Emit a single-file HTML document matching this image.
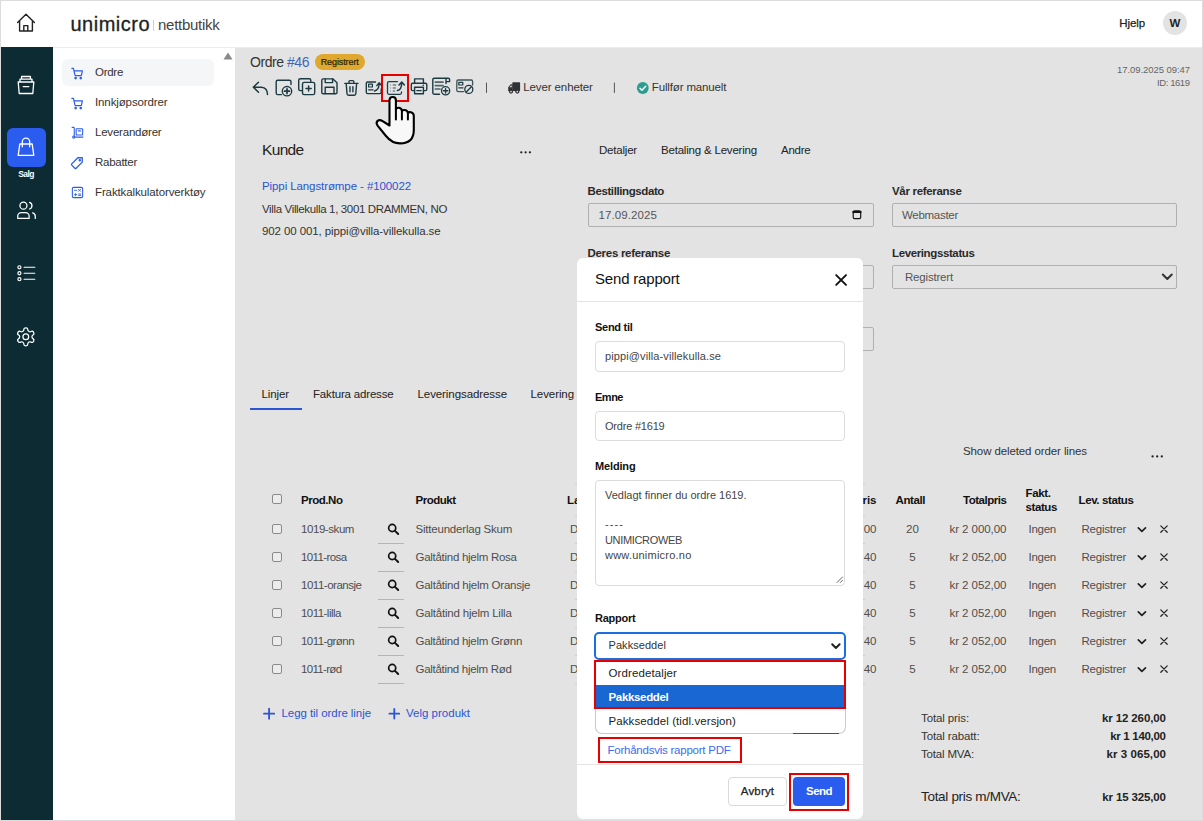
<!DOCTYPE html>
<html lang="no"><head><meta charset="utf-8"><title>Ordre #46 - Send rapport</title>
<style>
html,body{margin:0;padding:0;}
body{width:1203px;height:821px;overflow:hidden;position:relative;background:#e3e3e3;font-family:"Liberation Sans", sans-serif;}
.a{position:absolute;box-sizing:border-box;}
.t{position:absolute;white-space:nowrap;font-family:"Liberation Sans", sans-serif;}
svg{position:absolute;overflow:visible;}


</style></head><body>
<div class="a " style="left:0px;top:0px;width:1203px;height:47px;background:#fff;"></div><div class="a " style="left:0px;top:47px;width:1203px;height:1px;background:#ececec;"></div><div class="a " style="left:1px;top:47px;width:52px;height:774px;background:#0c2b33;"></div><div class="a " style="left:53px;top:48px;width:182px;height:773px;background:#fff;"></div><div class="a " style="left:62px;top:59px;width:152px;height:27px;background:#f5f6f8;border-radius:6px;"></div><div class="a " style="left:7px;top:128px;width:39px;height:39px;background:#2b5cf0;border-radius:6px;"></div><svg style="left:0;top:0" width="60" height="47" viewBox="0 0 60 47" fill="none" stroke="#222" stroke-width="1.4" stroke-linecap="round" stroke-linejoin="round"><path d="M17.6 22.6 L26 14.2 L34.4 22.6 M19.6 21 V31 H32.4 V21 M23.8 31 V25.6 H27.8 V31"/></svg><span class="t" style="left:70.50px;top:11.00px;font-size:20px;font-weight:400;color:#222;line-height:26px;letter-spacing:0.49px;-webkit-text-stroke:0.3px #222;">unimicro</span><div class="a " style="left:153px;top:20px;width:1px;height:11px;background:#cfcfcf;"></div><span class="t" style="left:158.00px;top:14.50px;font-size:15px;font-weight:400;color:#444;line-height:20px;letter-spacing:-0.272px;">nettbutikk</span><span class="t" style="left:1119.30px;top:15.50px;font-size:11.5px;font-weight:400;color:#222;line-height:15px;letter-spacing:-0.084px;-webkit-text-stroke:0.25px #222;">Hjelp</span><div class="a " style="left:1163px;top:11px;width:24px;height:24px;background:#e3e3e3;border-radius:50%;"></div><span class="t" style="left:1169.57px;top:15.50px;font-size:11.5px;font-weight:700;color:#222;line-height:15px;">W</span><svg style="left:0;top:47px" width="53" height="400" viewBox="0 47 53 400" fill="none" stroke="#fff" stroke-width="1.3" stroke-linecap="round" stroke-linejoin="round"><path d="M18.2 82 H33.8 L32.8 93.5 H19.2 Z M20 82 V79.2 H32 V82 M21.6 79.2 V76.5 H30.4 V79.2 M23.2 86.6 H28.8"/><path d="M19.8 144 H32.2 L33.8 155.4 H18.2 Z M22.3 146.8 V141.8 a3.7 3.7 0 0 1 7.4 0 V146.8"/></svg><span class="t" style="left:18.25px;top:169.00px;font-size:8.5px;font-weight:700;color:#ffffff;line-height:11px;letter-spacing:-0.613px;">Salg</span><svg style="left:15.6px;top:200.3px" width="21" height="21" viewBox="0 0 24 24" fill="none" stroke="#ffffff" stroke-width="1.45" stroke-linecap="round" stroke-linejoin="round" ><path d="M15 21v-2.5a4 4 0 0 0-4-4H6a4 4 0 0 0-4 4V21Z"/><circle cx="8.5" cy="6.5" r="4"/><path d="M22 21v-2.5a4 4 0 0 0-3-3.87"/><path d="M15.5 2.7a4 4 0 0 1 0 7.6"/></svg><svg style="left:15.6px;top:262.8px" width="20.5" height="20.5" viewBox="0 0 24 24" fill="none" stroke="#ffffff" stroke-width="1.4" stroke-linecap="round" stroke-linejoin="round" ><circle cx="4" cy="5" r="1.8"/><circle cx="4" cy="12" r="1.8"/><circle cx="4" cy="19" r="1.8"/><path d="M9.5 5 H22 M9.5 12 H22 M9.5 19 H22"/></svg><svg style="left:15.2px;top:326.3px" width="21.6" height="21.6" viewBox="0 0 24 24" fill="none" stroke="#ffffff" stroke-width="1.4" stroke-linecap="round" stroke-linejoin="round" ><path d="M12.22 2h-.44a2 2 0 0 0-2 2v.18a2 2 0 0 1-1 1.73l-.43.25a2 2 0 0 1-2 0l-.15-.08a2 2 0 0 0-2.73.73l-.22.38a2 2 0 0 0 .73 2.73l.15.1a2 2 0 0 1 1 1.72v.51a2 2 0 0 1-1 1.74l-.15.09a2 2 0 0 0-.73 2.73l.22.38a2 2 0 0 0 2.73.73l.15-.08a2 2 0 0 1 2 0l.43.25a2 2 0 0 1 1 1.73V20a2 2 0 0 0 2 2h.44a2 2 0 0 0 2-2v-.18a2 2 0 0 1 1-1.73l.43-.25a2 2 0 0 1 2 0l.15.08a2 2 0 0 0 2.73-.73l.22-.39a2 2 0 0 0-.73-2.73l-.15-.08a2 2 0 0 1-1-1.74v-.5a2 2 0 0 1 1-1.74l.15-.09a2 2 0 0 0 .73-2.73l-.22-.38a2 2 0 0 0-2.73-.73l-.15.08a2 2 0 0 1-2 0l-.43-.25a2 2 0 0 1-1-1.73V4a2 2 0 0 0-2-2z"/><circle cx="12" cy="12" r="3.2"/></svg><svg style="left:70.5px;top:66.5px" width="13" height="13" viewBox="0 0 24 24" fill="none" stroke="#2b5cf0" stroke-width="2.2" stroke-linecap="round" stroke-linejoin="round" ><circle cx="8.5" cy="20.5" r="1.3" fill="#2b5cf0"/><circle cx="18" cy="20.5" r="1.3" fill="#2b5cf0"/><path d="M1.5 2.5 h3 l2.7 12.2 a1.6 1.6 0 0 0 1.6 1.3 h9 a1.6 1.6 0 0 0 1.6 -1.3 l1.6 -7.7 H5.6"/></svg><svg style="left:70.5px;top:96.5px" width="13" height="13" viewBox="0 0 24 24" fill="none" stroke="#2b5cf0" stroke-width="2.2" stroke-linecap="round" stroke-linejoin="round" ><circle cx="8.5" cy="20.5" r="1.3" fill="#2b5cf0"/><circle cx="18" cy="20.5" r="1.3" fill="#2b5cf0"/><path d="M1.5 2.5 h3 l2.7 12.2 a1.6 1.6 0 0 0 1.6 1.3 h9 a1.6 1.6 0 0 0 1.6 -1.3 l1.6 -7.7 H5.6"/></svg><svg style="left:70.5px;top:126px" width="13" height="13" viewBox="0 0 24 24" fill="none" stroke="#2b5cf0" stroke-width="2" stroke-linecap="round" stroke-linejoin="round" ><path d="M2 2.5 h2.5 a1.5 1.5 0 0 1 1.5 1.5 V18.5"/><circle cx="5" cy="20.5" r="1.9"/><path d="M7 20.5 H22"/><rect x="9.5" y="5" width="12" height="11.5" rx="1"/><path d="M13.5 9 h4"/></svg><svg style="left:70px;top:155.5px" width="14" height="14" viewBox="0 0 24 24" fill="none" stroke="#2b5cf0" stroke-width="2.2" stroke-linecap="round" stroke-linejoin="round" ><path d="M13.5 3 H21 V10.5 L10.5 21 a1.5 1.5 0 0 1 -2.1 0 L3 15.6 a1.5 1.5 0 0 1 0 -2.1 Z"/><circle cx="16.8" cy="7.2" r="1" fill="#2b5cf0"/></svg><svg style="left:70.5px;top:186px" width="13" height="13" viewBox="0 0 24 24" fill="none" stroke="#2b5cf0" stroke-width="2" stroke-linecap="round" stroke-linejoin="round" ><rect x="2.5" y="2.5" width="19" height="19" rx="2.5"/><path d="M6.5 8 h4 M14 6.2 l3.6 3.6 M17.6 6.2 l-3.6 3.6 M6.5 16 h4 M8.5 14 v4 M14 14.8 h4 M14 17.4 h4" stroke-width="1.7"/></svg><span class="t" style="left:95.00px;top:65.00px;font-size:11.5px;font-weight:400;color:#333;line-height:15px;letter-spacing:-0.281px;">Ordre</span><span class="t" style="left:95.00px;top:95.00px;font-size:11.5px;font-weight:400;color:#333;line-height:15px;letter-spacing:-0.117px;">Innkjøpsordrer</span><span class="t" style="left:95.00px;top:125.00px;font-size:11.5px;font-weight:400;color:#333;line-height:15px;letter-spacing:-0.212px;">Leverandører</span><span class="t" style="left:95.00px;top:155.00px;font-size:11.5px;font-weight:400;color:#333;line-height:15px;letter-spacing:-0.264px;">Rabatter</span><span class="t" style="left:95.00px;top:185.00px;font-size:11.5px;font-weight:400;color:#333;line-height:15px;letter-spacing:-0.119px;">Fraktkalkulatorverktøy</span><svg style="left:222.5px;top:51.5px" width="10" height="8" viewBox="0 0 10 8"><path d="M5 0.5 L9.5 7.5 H0.5 Z" fill="#8a8a8a"/></svg><span class="t" style="left:250.00px;top:52.50px;font-size:14px;font-weight:400;color:#333;line-height:18px;letter-spacing:-0.45px;">Ordre <span style="color:#3d68b8">#46</span></span><div class="a " style="left:315px;top:54px;width:49.5px;height:16px;background:#e0a82e;border-radius:8px;"></div><span class="t" style="left:320.70px;top:56.00px;font-size:9px;font-weight:400;color:#2a2200;line-height:12px;letter-spacing:-0.102px;-webkit-text-stroke:0.2px #2a2200;">Registrert</span><span class="t" style="left:1116.95px;top:64.00px;font-size:9.5px;font-weight:400;color:#666;line-height:12px;letter-spacing:-0.061px;">17.09.2025 09:47</span><span class="t" style="left:1157.07px;top:77.00px;font-size:9.5px;font-weight:400;color:#666;line-height:12px;letter-spacing:-0.428px;">ID: 1619</span><div class="a " style="left:381px;top:74px;width:28px;height:28px;border:2px solid #e60000;"></div><span class="t" style="left:523.30px;top:80.00px;font-size:11.5px;font-weight:400;color:#333;line-height:15px;letter-spacing:-0.113px;">Lever enheter</span><span class="t" style="left:651.80px;top:80.00px;font-size:11.5px;font-weight:400;color:#333;line-height:15px;letter-spacing:-0.146px;">Fullfør manuelt</span><span class="t" style="left:262.00px;top:140.00px;font-size:15.5px;font-weight:400;color:#222;line-height:20px;letter-spacing:-0.666px;">Kunde</span><span class="t" style="left:262.00px;top:178.50px;font-size:11.5px;font-weight:400;color:#2a54d2;line-height:15px;letter-spacing:-0.093px;">Pippi Langstrømpe - #100022</span><span class="t" style="left:262.00px;top:201.50px;font-size:11.5px;font-weight:400;color:#333;line-height:15px;letter-spacing:-0.353px;">Villa Villekulla 1, 3001 DRAMMEN, NO</span><span class="t" style="left:262.00px;top:223.50px;font-size:11.5px;font-weight:400;color:#333;line-height:15px;letter-spacing:-0.105px;">902 00 001, pippi@villa-villekulla.se</span><span class="t" style="left:599.00px;top:142.50px;font-size:11.5px;font-weight:400;color:#222;line-height:15px;letter-spacing:-0.205px;">Detaljer</span><span class="t" style="left:661.00px;top:142.50px;font-size:11.5px;font-weight:400;color:#222;line-height:15px;letter-spacing:-0.197px;">Betaling &amp; Levering</span><span class="t" style="left:781.00px;top:142.50px;font-size:11.5px;font-weight:400;color:#222;line-height:15px;letter-spacing:-0.237px;">Andre</span><span class="t" style="left:587.50px;top:183.50px;font-size:11.5px;font-weight:700;color:#2a2a2a;line-height:15px;letter-spacing:-0.396px;">Bestillingsdato</span><span class="t" style="left:892.00px;top:183.50px;font-size:11.5px;font-weight:700;color:#2a2a2a;line-height:15px;letter-spacing:-0.31px;">Vår referanse</span><span class="t" style="left:587.50px;top:245.50px;font-size:11.5px;font-weight:700;color:#2a2a2a;line-height:15px;letter-spacing:-0.297px;">Deres referanse</span><span class="t" style="left:892.00px;top:245.50px;font-size:11.5px;font-weight:700;color:#2a2a2a;line-height:15px;letter-spacing:-0.38px;">Leveringsstatus</span><div class="a " style="left:588px;top:203px;width:286px;height:24px;border:1px solid #b0b0b0;border-radius:2px;"></div><div class="a " style="left:892px;top:203px;width:285px;height:24px;border:1px solid #b0b0b0;border-radius:2px;"></div><div class="a " style="left:588px;top:265px;width:286px;height:24px;border:1px solid #b0b0b0;border-radius:2px;"></div><div class="a " style="left:892px;top:265px;width:285px;height:24px;border:1px solid #b0b0b0;border-radius:2px;"></div><div class="a " style="left:588px;top:327px;width:286px;height:24px;border:1px solid #b0b0b0;border-radius:2px;"></div><span class="t" style="left:598.50px;top:208.00px;font-size:11.5px;font-weight:400;color:#555;line-height:15px;letter-spacing:0.094px;">17.09.2025</span><span class="t" style="left:902.00px;top:208.00px;font-size:11.5px;font-weight:400;color:#555;line-height:15px;letter-spacing:-0.288px;">Webmaster</span><span class="t" style="left:905.00px;top:270.00px;font-size:11.5px;font-weight:400;color:#555;line-height:15px;letter-spacing:-0.186px;">Registrert</span><span class="t" style="left:261.50px;top:386.50px;font-size:11.5px;font-weight:400;color:#222;line-height:15px;letter-spacing:-0.107px;">Linjer</span><span class="t" style="left:313.00px;top:386.50px;font-size:11.5px;font-weight:400;color:#222;line-height:15px;letter-spacing:-0.174px;">Faktura adresse</span><span class="t" style="left:417.50px;top:386.50px;font-size:11.5px;font-weight:400;color:#222;line-height:15px;letter-spacing:-0.08px;">Leveringsadresse</span><span class="t" style="left:530.50px;top:386.50px;font-size:11.5px;font-weight:400;color:#222;line-height:15px;letter-spacing:-0.078px;">Levering</span><div class="a " style="left:250px;top:408px;width:52px;height:2px;background:#2b55d4;"></div><span class="t" style="left:963.00px;top:443.50px;font-size:11.5px;font-weight:400;color:#333;line-height:15px;letter-spacing:-0.108px;">Show deleted order lines</span><div class="a " style="left:272px;top:494px;width:10px;height:10px;border:1px solid #8a8a8a;border-radius:2px;background:#ececec;"></div><span class="t" style="left:301.00px;top:493.00px;font-size:11.5px;font-weight:700;color:#111;line-height:15px;letter-spacing:-0.462px;">Prod.No</span><span class="t" style="left:415.50px;top:493.00px;font-size:11.5px;font-weight:700;color:#111;line-height:15px;letter-spacing:-0.493px;">Produkt</span><span class="t" style="left:567.00px;top:493.00px;font-size:11.5px;font-weight:700;color:#111;line-height:15px;">La</span><span class="t" style="left:862.42px;top:493.00px;font-size:11.5px;font-weight:700;color:#111;line-height:15px;">ris</span><span class="t" style="left:895.50px;top:493.00px;font-size:11.5px;font-weight:700;color:#111;line-height:15px;letter-spacing:-0.409px;">Antall</span><span class="t" style="left:963.00px;top:493.00px;font-size:11.5px;font-weight:700;color:#111;line-height:15px;letter-spacing:-0.469px;">Totalpris</span><span class="t" style="left:1025.50px;top:485.50px;font-size:11.5px;font-weight:700;color:#111;line-height:15px;letter-spacing:-0.369px;">Fakt.</span><span class="t" style="left:1025.50px;top:500.00px;font-size:11.5px;font-weight:700;color:#111;line-height:15px;letter-spacing:-0.396px;">status</span><span class="t" style="left:1078.50px;top:493.00px;font-size:11.5px;font-weight:700;color:#111;line-height:15px;letter-spacing:-0.385px;">Lev. status</span><div class="a " style="left:272px;top:523.5px;width:10px;height:10.0px;border:1px solid #8a8a8a;border-radius:2px;background:#ececec;"></div><span class="t" style="left:301.00px;top:522.00px;font-size:11.5px;font-weight:400;color:#4e4e4e;line-height:15px;letter-spacing:-0.432px;">1019-skum</span><span class="t" style="left:415.50px;top:522.00px;font-size:11.5px;font-weight:400;color:#4e4e4e;line-height:15px;letter-spacing:-0.204px;">Sitteunderlag Skum</span><span class="t" style="left:570.00px;top:522.00px;font-size:11.5px;font-weight:400;color:#4e4e4e;line-height:15px;">D</span><span class="t" style="left:863.85px;top:522.00px;font-size:11.5px;font-weight:400;color:#4e4e4e;line-height:15px;letter-spacing:-0.148px;">00</span><span class="t" style="left:906.10px;top:522.00px;font-size:11.5px;font-weight:400;color:#4e4e4e;line-height:15px;">20</span><span class="t" style="left:949.45px;top:522.00px;font-size:11.5px;font-weight:400;color:#4e4e4e;line-height:15px;letter-spacing:-0.05px;">kr 2 000,00</span><span class="t" style="left:1028.50px;top:522.00px;font-size:11.5px;font-weight:400;color:#4e4e4e;line-height:15px;letter-spacing:-0.256px;">Ingen</span><span class="t" style="left:1081.50px;top:522.00px;font-size:11.5px;font-weight:400;color:#4e4e4e;line-height:15px;letter-spacing:-0.24px;">Registrer</span><div class="a " style="left:378px;top:543px;width:26px;height:1px;background:#b5b5b5;"></div><div class="a " style="left:272px;top:551.5px;width:10px;height:10.0px;border:1px solid #8a8a8a;border-radius:2px;background:#ececec;"></div><span class="t" style="left:301.00px;top:550.00px;font-size:11.5px;font-weight:400;color:#4e4e4e;line-height:15px;letter-spacing:-0.604px;">1011-rosa</span><span class="t" style="left:415.50px;top:550.00px;font-size:11.5px;font-weight:400;color:#4e4e4e;line-height:15px;letter-spacing:-0.277px;">Galtåtind hjelm Rosa</span><span class="t" style="left:570.00px;top:550.00px;font-size:11.5px;font-weight:400;color:#4e4e4e;line-height:15px;">D</span><span class="t" style="left:863.85px;top:550.00px;font-size:11.5px;font-weight:400;color:#4e4e4e;line-height:15px;letter-spacing:-0.148px;">40</span><span class="t" style="left:909.30px;top:550.00px;font-size:11.5px;font-weight:400;color:#4e4e4e;line-height:15px;">5</span><span class="t" style="left:949.45px;top:550.00px;font-size:11.5px;font-weight:400;color:#4e4e4e;line-height:15px;letter-spacing:-0.05px;">kr 2 052,00</span><span class="t" style="left:1028.50px;top:550.00px;font-size:11.5px;font-weight:400;color:#4e4e4e;line-height:15px;letter-spacing:-0.256px;">Ingen</span><span class="t" style="left:1081.50px;top:550.00px;font-size:11.5px;font-weight:400;color:#4e4e4e;line-height:15px;letter-spacing:-0.24px;">Registrer</span><div class="a " style="left:378px;top:571px;width:26px;height:1px;background:#b5b5b5;"></div><div class="a " style="left:272px;top:579.5px;width:10px;height:10.0px;border:1px solid #8a8a8a;border-radius:2px;background:#ececec;"></div><span class="t" style="left:301.00px;top:578.00px;font-size:11.5px;font-weight:400;color:#4e4e4e;line-height:15px;letter-spacing:-0.482px;">1011-oransje</span><span class="t" style="left:415.50px;top:578.00px;font-size:11.5px;font-weight:400;color:#4e4e4e;line-height:15px;letter-spacing:-0.238px;">Galtåtind hjelm Oransje</span><span class="t" style="left:570.00px;top:578.00px;font-size:11.5px;font-weight:400;color:#4e4e4e;line-height:15px;">D</span><span class="t" style="left:863.85px;top:578.00px;font-size:11.5px;font-weight:400;color:#4e4e4e;line-height:15px;letter-spacing:-0.148px;">40</span><span class="t" style="left:909.30px;top:578.00px;font-size:11.5px;font-weight:400;color:#4e4e4e;line-height:15px;">5</span><span class="t" style="left:949.45px;top:578.00px;font-size:11.5px;font-weight:400;color:#4e4e4e;line-height:15px;letter-spacing:-0.05px;">kr 2 052,00</span><span class="t" style="left:1028.50px;top:578.00px;font-size:11.5px;font-weight:400;color:#4e4e4e;line-height:15px;letter-spacing:-0.256px;">Ingen</span><span class="t" style="left:1081.50px;top:578.00px;font-size:11.5px;font-weight:400;color:#4e4e4e;line-height:15px;letter-spacing:-0.24px;">Registrer</span><div class="a " style="left:378px;top:599px;width:26px;height:1px;background:#b5b5b5;"></div><div class="a " style="left:272px;top:607.5px;width:10px;height:10.0px;border:1px solid #8a8a8a;border-radius:2px;background:#ececec;"></div><span class="t" style="left:301.00px;top:606.00px;font-size:11.5px;font-weight:400;color:#4e4e4e;line-height:15px;letter-spacing:-0.539px;">1011-lilla</span><span class="t" style="left:415.50px;top:606.00px;font-size:11.5px;font-weight:400;color:#4e4e4e;line-height:15px;letter-spacing:-0.203px;">Galtåtind hjelm Lilla</span><span class="t" style="left:570.00px;top:606.00px;font-size:11.5px;font-weight:400;color:#4e4e4e;line-height:15px;">D</span><span class="t" style="left:863.85px;top:606.00px;font-size:11.5px;font-weight:400;color:#4e4e4e;line-height:15px;letter-spacing:-0.148px;">40</span><span class="t" style="left:909.30px;top:606.00px;font-size:11.5px;font-weight:400;color:#4e4e4e;line-height:15px;">5</span><span class="t" style="left:949.45px;top:606.00px;font-size:11.5px;font-weight:400;color:#4e4e4e;line-height:15px;letter-spacing:-0.05px;">kr 2 052,00</span><span class="t" style="left:1028.50px;top:606.00px;font-size:11.5px;font-weight:400;color:#4e4e4e;line-height:15px;letter-spacing:-0.256px;">Ingen</span><span class="t" style="left:1081.50px;top:606.00px;font-size:11.5px;font-weight:400;color:#4e4e4e;line-height:15px;letter-spacing:-0.24px;">Registrer</span><div class="a " style="left:378px;top:627px;width:26px;height:1px;background:#b5b5b5;"></div><div class="a " style="left:272px;top:635.5px;width:10px;height:10.0px;border:1px solid #8a8a8a;border-radius:2px;background:#ececec;"></div><span class="t" style="left:301.00px;top:634.00px;font-size:11.5px;font-weight:400;color:#4e4e4e;line-height:15px;letter-spacing:-0.561px;">1011-grønn</span><span class="t" style="left:415.50px;top:634.00px;font-size:11.5px;font-weight:400;color:#4e4e4e;line-height:15px;letter-spacing:-0.281px;">Galtåtind hjelm Grønn</span><span class="t" style="left:570.00px;top:634.00px;font-size:11.5px;font-weight:400;color:#4e4e4e;line-height:15px;">D</span><span class="t" style="left:863.85px;top:634.00px;font-size:11.5px;font-weight:400;color:#4e4e4e;line-height:15px;letter-spacing:-0.148px;">40</span><span class="t" style="left:909.30px;top:634.00px;font-size:11.5px;font-weight:400;color:#4e4e4e;line-height:15px;">5</span><span class="t" style="left:949.45px;top:634.00px;font-size:11.5px;font-weight:400;color:#4e4e4e;line-height:15px;letter-spacing:-0.05px;">kr 2 052,00</span><span class="t" style="left:1028.50px;top:634.00px;font-size:11.5px;font-weight:400;color:#4e4e4e;line-height:15px;letter-spacing:-0.256px;">Ingen</span><span class="t" style="left:1081.50px;top:634.00px;font-size:11.5px;font-weight:400;color:#4e4e4e;line-height:15px;letter-spacing:-0.24px;">Registrer</span><div class="a " style="left:378px;top:655px;width:26px;height:1px;background:#b5b5b5;"></div><div class="a " style="left:272px;top:663.5px;width:10px;height:10.0px;border:1px solid #8a8a8a;border-radius:2px;background:#ececec;"></div><span class="t" style="left:301.00px;top:662.00px;font-size:11.5px;font-weight:400;color:#4e4e4e;line-height:15px;letter-spacing:-0.677px;">1011-rød</span><span class="t" style="left:415.50px;top:662.00px;font-size:11.5px;font-weight:400;color:#4e4e4e;line-height:15px;letter-spacing:-0.291px;">Galtåtind hjelm Rød</span><span class="t" style="left:570.00px;top:662.00px;font-size:11.5px;font-weight:400;color:#4e4e4e;line-height:15px;">D</span><span class="t" style="left:863.85px;top:662.00px;font-size:11.5px;font-weight:400;color:#4e4e4e;line-height:15px;letter-spacing:-0.148px;">40</span><span class="t" style="left:909.30px;top:662.00px;font-size:11.5px;font-weight:400;color:#4e4e4e;line-height:15px;">5</span><span class="t" style="left:949.45px;top:662.00px;font-size:11.5px;font-weight:400;color:#4e4e4e;line-height:15px;letter-spacing:-0.05px;">kr 2 052,00</span><span class="t" style="left:1028.50px;top:662.00px;font-size:11.5px;font-weight:400;color:#4e4e4e;line-height:15px;letter-spacing:-0.256px;">Ingen</span><span class="t" style="left:1081.50px;top:662.00px;font-size:11.5px;font-weight:400;color:#4e4e4e;line-height:15px;letter-spacing:-0.24px;">Registrer</span><div class="a " style="left:378px;top:683px;width:26px;height:1px;background:#b5b5b5;"></div><span class="t" style="left:281.50px;top:706.00px;font-size:11.5px;font-weight:400;color:#2b55d4;line-height:15px;letter-spacing:-0.064px;">Legg til ordre linje</span><span class="t" style="left:406.00px;top:706.00px;font-size:11.5px;font-weight:400;color:#2b55d4;line-height:15px;letter-spacing:0.005px;">Velg produkt</span><span class="t" style="left:921.00px;top:711.00px;font-size:11.5px;font-weight:400;color:#333;line-height:15px;letter-spacing:-0.111px;">Total pris:</span><span class="t" style="left:921.00px;top:729.00px;font-size:11.5px;font-weight:400;color:#333;line-height:15px;letter-spacing:-0.123px;">Total rabatt:</span><span class="t" style="left:921.00px;top:747.00px;font-size:11.5px;font-weight:400;color:#333;line-height:15px;letter-spacing:-0.175px;">Total MVA:</span><span class="t" style="left:1101.90px;top:711.00px;font-size:11.5px;font-weight:700;color:#222;line-height:15px;letter-spacing:-0.103px;">kr 12 260,00</span><span class="t" style="left:1110.20px;top:729.00px;font-size:11.5px;font-weight:700;color:#222;line-height:15px;letter-spacing:-0.304px;">kr 1 140,00</span><span class="t" style="left:1106.56px;top:747.00px;font-size:11.5px;font-weight:700;color:#222;line-height:15px;letter-spacing:0.06px;">kr 3 065,00</span><span class="t" style="left:921.00px;top:788.00px;font-size:13.5px;font-weight:400;color:#222;line-height:18px;letter-spacing:-0.311px;">Total pris m/MVA:</span><span class="t" style="left:1102.36px;top:790.00px;font-size:11.5px;font-weight:700;color:#222;line-height:15px;letter-spacing:-0.145px;">kr 15 325,00</span><svg style="left:0;top:0" width="1203" height="821" viewBox="0 0 1203 821" fill="none" stroke-linecap="round" stroke-linejoin="round"><path d="M258.5 82.2 L253.3 87.2 L258.5 92.2 M253.6 87.2 H261.5 Q267.3 87.5 267.5 94.5" stroke="#1c3a42" stroke-width="1.5" fill="none" /><path d="M291 84.5 V81.8 Q291 80.2 289.4 80.2 H277.8 Q276.2 80.2 276.2 81.8 V93 Q276.2 94.6 277.8 94.6 H281.5" stroke="#1c3a42" stroke-width="1.4" fill="none" /><circle cx="287" cy="91.2" r="4.7" stroke="#1c3a42" stroke-width="1.4" fill="none"/><path d="M284.6 91.2 H289.4 M287 88.8 V93.6" stroke="#1c3a42" stroke-width="1.7" fill="none" /><path d="M301.5 90.6 H300.2 Q298.7 90.6 298.7 89.1 V80.2 Q298.7 78.7 300.2 78.7 H309.3 Q310.8 78.7 310.8 80.2 V81.5" stroke="#1c3a42" stroke-width="1.4" fill="none" /><rect x="302.5" y="82.4" width="12.2" height="12.2" rx="1.6" stroke="#1c3a42" stroke-width="1.4" fill="none"/><path d="M306 88.5 H311.2 M308.6 85.9 V91.1" stroke="#1c3a42" stroke-width="1.5" fill="none" /><path d="M323.2 78.9 H333 L337 82.8 V92.4 Q337 93.8 335.6 93.8 H323.2 Q321.8 93.8 321.8 92.4 V80.3 Q321.8 78.9 323.2 78.9 Z" stroke="#1c3a42" stroke-width="1.4" fill="none" /><path d="M325.2 79 V82.6 H332.6 V79 M325.2 93.6 V87.3 H334 V93.6" stroke="#1c3a42" stroke-width="1.4" fill="none" /><path d="M344.8 83.4 H358 M349 83.2 V81.6 Q349 80.6 350 80.6 H352.8 Q353.8 80.6 353.8 81.6 V83.2 M346.2 83.6 L347 93.8 Q347.1 95.2 348.5 95.2 H354.3 Q355.7 95.2 355.8 93.8 L356.6 83.6 M350 86.8 V91.8 M352.9 86.8 V91.8" stroke="#1c3a42" stroke-width="1.4" fill="none" /><path d="M375.5 82 H367.6 Q366.3 82 366.3 83.3 V92.2 Q366.3 93.6 367.6 93.6 H379.8 Q381.2 93.6 381.2 92.2 V89" stroke="#1c3a42" stroke-width="1.4" fill="none" /><rect x="368.6" y="84.2" width="3.8" height="2.8" stroke="#1c3a42" stroke-width="1.2" fill="none"/><path d="M368.6 89.8 H373" stroke="#1c3a42" stroke-width="1.3" fill="none" /><path d="M374.5 91 Q379 90 379.2 83.5 M376.8 85.6 L379.2 82.8 L381.6 85.6" stroke="#1c3a42" stroke-width="1.4" fill="none" /><path d="M397.5 81.6 H389 Q387.5 81.6 387.5 83.1 V92.8 Q387.5 94.3 389 94.3 H400 Q401.5 94.3 401.5 92.8 V92" stroke="#1f3d45" stroke-width="1.3" fill="none" /><path d="M390.1 85 h0.6 M390.1 88 h0.6 M390.1 91 h0.6 M392.8 85 h3.4 M392.8 88 h3.1 M392.8 91 h2.2" stroke="#6f8489" stroke-width="1.5" fill="none" stroke-linecap="butt"/><path d="M397.4 90.6 Q401.5 89.8 401.7 83.2 M399 84.9 L401.7 82 L404.4 84.9" stroke="#1c3a42" stroke-width="1.5" fill="none" /><path d="M414.6 83 V78.9 H423.4 V83 M414.4 90.6 H412.6 Q411.3 90.6 411.3 89.3 V84.6 Q411.3 83.2 412.6 83.2 H425.4 Q426.8 83.2 426.8 84.6 V89.3 Q426.8 90.6 425.4 90.6 H423.6 M414.6 87.2 H423.4 V93.8 H414.6 Z M416.8 90.6 H421.2" stroke="#1c3a42" stroke-width="1.4" fill="none" /><circle cx="423.3" cy="85.2" r="0.8" fill="#1c3a42"/><path d="M439.5 94.2 H434.2 Q432.8 94.2 432.8 92.8 V79.6 Q432.8 78.2 434.2 78.2 H446 V83.5 M446 78.2 H448.2 Q449.6 78.2 449.6 79.6 V81.6 H446" stroke="#1c3a42" stroke-width="1.4" fill="none" /><path d="M435.4 82.2 H443 M435.4 85.6 H443 M435.4 89 H440" stroke="#4f666b" stroke-width="1.7" fill="none" /><circle cx="445.6" cy="90.8" r="4.1" stroke="#1c3a42" stroke-width="1.3" fill="none"/><path d="M443.4 90.8 H447.8 M445.6 88.6 V93" stroke="#1c3a42" stroke-width="1.4" fill="none" /><path d="M472.6 85 V81.4 Q472.6 80 471.2 80 H458.2 Q456.8 80 456.8 81.4 V90.2 Q456.8 91.6 458.2 91.6 H463.5" stroke="#3c555b" stroke-width="1.3" fill="none" /><rect x="458.8" y="82.4" width="4" height="2.6" stroke="#1c3a42" stroke-width="1.2" fill="none"/><path d="M458.8 87.8 H463" stroke="#1c3a42" stroke-width="1.3" fill="none" /><circle cx="468.8" cy="89.4" r="4" stroke="#1c3a42" stroke-width="1.3" fill="none"/><path d="M466.2 92 L471.4 86.8" stroke="#1c3a42" stroke-width="1.3" fill="none" /><path d="M486.5 83 V92.5 M614.4 83 V92.5" stroke="#555" stroke-width="1" fill="none" /><rect x="512.3" y="82.2" width="7.8" height="8.8" rx="0.7" fill="#2f3135"/><path d="M512.6 84.3 H510.7 L508.2 87.3 V91 H512.6 Z" fill="#2f3135"/><path d="M511.7 85.4 H510.9 L509.5 87.2 H511.7 Z" fill="#e3e3e3"/><circle cx="511" cy="91.6" r="2.1" fill="#2f3135"/><circle cx="517.3" cy="91.6" r="2.1" fill="#2f3135"/><circle cx="511" cy="91.6" r="0.85" fill="#dcdcdc"/><circle cx="517.3" cy="91.6" r="0.85" fill="#dcdcdc"/><circle cx="642.8" cy="88" r="5.9" fill="#2a9d8f"/><path d="M640 88.2 L642 90.2 L645.7 86.2" stroke="#fff" stroke-width="1.5" fill="none"/><path d="M389.5 125.5 L389.5 100.2 Q389.5 97 392.7 97 Q395.9 97 395.9 100.2 L395.9 109.3 Q396.6 107.6 399 107.8 Q401.5 108.1 401.9 110.8 Q402.7 109.7 405 110 Q407.5 110.5 407.9 112.8 Q408.8 111.8 411 112.2 Q413.8 112.9 413.8 116 L413.8 130 Q413.8 143.4 400 143.4 Q392 143.4 386 136 L377.6 125.6 Q375.6 122.6 377.6 120.9 Q379.6 119.3 382.6 121.1 L389.5 125.5 Z" fill="#f8f8f8" stroke="#000" stroke-width="2.1" stroke-linejoin="round"/><path d="M395.9 109 V119.5 M401.9 111 V119.5 M407.9 113 V119.5" stroke="#000" stroke-width="2" fill="none" /><circle cx="521.3" cy="152.3" r="1.15" fill="#222"/><circle cx="525.6" cy="152.3" r="1.15" fill="#222"/><circle cx="529.9" cy="152.3" r="1.15" fill="#222"/><rect x="853.2" y="210.8" width="7.5" height="7.8" rx="1.3" stroke="#111" stroke-width="1.15" fill="none"/><path d="M853.2 211.9 H860.7" stroke="#111" stroke-width="2"/><path d="M1162.8 274.5 L1167.3 279 L1171.8 274.5" stroke="#333" stroke-width="2" fill="none" /><circle cx="1152.6" cy="456.4" r="1.15" fill="#222"/><circle cx="1157.2" cy="456.4" r="1.15" fill="#222"/><circle cx="1161.8" cy="456.4" r="1.15" fill="#222"/><circle cx="392.2" cy="528.0" r="3.55" stroke="#111" stroke-width="1.7" fill="none"/><path d="M395 530.8 L398.2 534" stroke="#111" stroke-width="1.9"/><path d="M1138.3 527.8 L1141.9 531.4 L1145.5 527.8" stroke="#222" stroke-width="1.7" fill="none" /><path d="M1160.8 525.9 L1167.2 532.3 M1167.2 525.9 L1160.8 532.3" stroke="#222" stroke-width="1.25" fill="none" /><circle cx="392.2" cy="556.0" r="3.55" stroke="#111" stroke-width="1.7" fill="none"/><path d="M395 558.8 L398.2 562" stroke="#111" stroke-width="1.9"/><path d="M1138.3 555.8 L1141.9 559.4 L1145.5 555.8" stroke="#222" stroke-width="1.7" fill="none" /><path d="M1160.8 553.9 L1167.2 560.3 M1167.2 553.9 L1160.8 560.3" stroke="#222" stroke-width="1.25" fill="none" /><circle cx="392.2" cy="584.0" r="3.55" stroke="#111" stroke-width="1.7" fill="none"/><path d="M395 586.8 L398.2 590" stroke="#111" stroke-width="1.9"/><path d="M1138.3 583.8 L1141.9 587.4 L1145.5 583.8" stroke="#222" stroke-width="1.7" fill="none" /><path d="M1160.8 581.9 L1167.2 588.3 M1167.2 581.9 L1160.8 588.3" stroke="#222" stroke-width="1.25" fill="none" /><circle cx="392.2" cy="612.0" r="3.55" stroke="#111" stroke-width="1.7" fill="none"/><path d="M395 614.8 L398.2 618" stroke="#111" stroke-width="1.9"/><path d="M1138.3 611.8 L1141.9 615.4 L1145.5 611.8" stroke="#222" stroke-width="1.7" fill="none" /><path d="M1160.8 609.9 L1167.2 616.3 M1167.2 609.9 L1160.8 616.3" stroke="#222" stroke-width="1.25" fill="none" /><circle cx="392.2" cy="640.0" r="3.55" stroke="#111" stroke-width="1.7" fill="none"/><path d="M395 642.8 L398.2 646" stroke="#111" stroke-width="1.9"/><path d="M1138.3 639.8 L1141.9 643.4 L1145.5 639.8" stroke="#222" stroke-width="1.7" fill="none" /><path d="M1160.8 637.9 L1167.2 644.3 M1167.2 637.9 L1160.8 644.3" stroke="#222" stroke-width="1.25" fill="none" /><circle cx="392.2" cy="668.0" r="3.55" stroke="#111" stroke-width="1.7" fill="none"/><path d="M395 670.8 L398.2 674" stroke="#111" stroke-width="1.9"/><path d="M1138.3 667.8 L1141.9 671.4 L1145.5 667.8" stroke="#222" stroke-width="1.7" fill="none" /><path d="M1160.8 665.9 L1167.2 672.3 M1167.2 665.9 L1160.8 672.3" stroke="#222" stroke-width="1.25" fill="none" /><path d="M264 713.7 H274.2 M269.1 708.6 V718.8 M389.4 713.7 H399.2 M394.3 708.8 V718.6" stroke="#2b55d4" stroke-width="1.8" fill="none" /></svg><div class="a " style="left:575px;top:483px;width:2px;height:1px;background:#cdcdcd;"></div><div class="a " style="left:863px;top:483px;width:2px;height:1px;background:#cdcdcd;"></div><div class="a " style="left:575px;top:515px;width:2px;height:1px;background:#cdcdcd;"></div><div class="a " style="left:863px;top:515px;width:2px;height:1px;background:#cdcdcd;"></div><div class="a " style="left:575px;top:543px;width:2px;height:1px;background:#cdcdcd;"></div><div class="a " style="left:863px;top:543px;width:2px;height:1px;background:#cdcdcd;"></div><div class="a " style="left:575px;top:571px;width:2px;height:1px;background:#cdcdcd;"></div><div class="a " style="left:863px;top:571px;width:2px;height:1px;background:#cdcdcd;"></div><div class="a " style="left:575px;top:599px;width:2px;height:1px;background:#cdcdcd;"></div><div class="a " style="left:863px;top:599px;width:2px;height:1px;background:#cdcdcd;"></div><div class="a " style="left:575px;top:627px;width:2px;height:1px;background:#cdcdcd;"></div><div class="a " style="left:863px;top:627px;width:2px;height:1px;background:#cdcdcd;"></div><div class="a " style="left:575px;top:655px;width:2px;height:1px;background:#cdcdcd;"></div><div class="a " style="left:863px;top:655px;width:2px;height:1px;background:#cdcdcd;"></div><div class="a " style="left:575px;top:683px;width:2px;height:1px;background:#cdcdcd;"></div><div class="a " style="left:863px;top:683px;width:2px;height:1px;background:#cdcdcd;"></div><div class="a " style="left:577px;top:258px;width:286px;height:561px;background:#fff;border-radius:6px;"></div><span class="t" style="left:595.00px;top:268.80px;font-size:15px;font-weight:400;color:#111;line-height:20px;letter-spacing:-0.186px;">Send rapport</span><div class="a " style="left:577px;top:301px;width:286px;height:1px;background:#e4e4e4;"></div><span class="t" style="left:595.00px;top:319.60px;font-size:11px;font-weight:700;color:#111;line-height:14px;letter-spacing:-0.279px;">Send til</span><span class="t" style="left:595.00px;top:389.80px;font-size:11px;font-weight:700;color:#111;line-height:14px;letter-spacing:-0.492px;">Emne</span><span class="t" style="left:595.00px;top:459.00px;font-size:11px;font-weight:700;color:#111;line-height:14px;letter-spacing:-0.152px;">Melding</span><span class="t" style="left:595.00px;top:610.80px;font-size:11px;font-weight:700;color:#111;line-height:14px;letter-spacing:-0.239px;">Rapport</span><div class="a " style="left:595px;top:341px;width:250px;height:31px;border:1px solid #dcdcdc;border-radius:4px;background:#fff;"></div><div class="a " style="left:595px;top:411px;width:250px;height:30px;border:1px solid #dcdcdc;border-radius:4px;background:#fff;"></div><div class="a " style="left:595px;top:480px;width:250px;height:106px;border:1px solid #dcdcdc;border-radius:4px;background:#fff;"></div><span class="t" style="left:605.00px;top:349.00px;font-size:11px;font-weight:400;color:#444;line-height:14px;letter-spacing:0.109px;">pippi@villa-villekulla.se</span><span class="t" style="left:605.00px;top:419.00px;font-size:11px;font-weight:400;color:#444;line-height:14px;letter-spacing:-0.206px;">Ordre #1619</span><span class="t" style="left:605.00px;top:487.70px;font-size:11px;font-weight:400;color:#444;line-height:14px;letter-spacing:-0.013px;">Vedlagt finner du ordre 1619.</span><span class="t" style="left:605.00px;top:517.20px;font-size:11px;font-weight:400;color:#444;line-height:14px;letter-spacing:1.086px;">----</span><span class="t" style="left:605.00px;top:532.60px;font-size:11px;font-weight:400;color:#444;line-height:14px;letter-spacing:-0.334px;">UNIMICROWEB</span><span class="t" style="left:605.00px;top:547.60px;font-size:11px;font-weight:400;color:#444;line-height:14px;letter-spacing:0.224px;">www.unimicro.no</span><div class="a " style="left:594px;top:632px;width:252px;height:28px;border:2px solid #1a6fe0;border-radius:5px;background:#fff;"></div><span class="t" style="left:608.50px;top:638.20px;font-size:11px;font-weight:400;color:#333;line-height:14px;letter-spacing:0.062px;">Pakkseddel</span><div class="a " style="left:595px;top:660px;width:251px;height:74px;background:#fff;border:1px solid #c9c9c9;border-top:none;border-radius:0 0 7px 7px;"></div><div class="a " style="left:793px;top:733px;width:46px;height:1px;background:#2f4bb0;"></div><div class="a " style="left:596px;top:685px;width:249px;height:23px;background:#1967d2;"></div><span class="t" style="left:608.50px;top:666.00px;font-size:11.5px;font-weight:400;color:#222;line-height:15px;letter-spacing:0.106px;">Ordredetaljer</span><span class="t" style="left:608.50px;top:690.00px;font-size:11.5px;font-weight:700;color:#fff;line-height:15px;letter-spacing:-0.33px;">Pakkseddel</span><span class="t" style="left:608.50px;top:714.00px;font-size:11.5px;font-weight:400;color:#222;line-height:15px;letter-spacing:0.089px;">Pakkseddel (tidl.versjon)</span><div class="a " style="left:594px;top:660px;width:252px;height:49px;border:2px solid #e60000;"></div><span class="t" style="left:607.50px;top:743.00px;font-size:11.5px;font-weight:400;color:#3b6cf0;line-height:15px;letter-spacing:-0.238px;">Forhåndsvis rapport PDF</span><div class="a " style="left:598px;top:736.5px;width:144px;height:26.0px;border:2px solid #e60000;"></div><div class="a " style="left:577px;top:764px;width:286px;height:1px;background:#e4e4e4;"></div><div class="a " style="left:728px;top:777px;width:59px;height:29px;border:1px solid #d9d9d9;border-radius:4px;background:#fff;"></div><span class="t" style="left:740.75px;top:784.00px;font-size:11.5px;font-weight:400;color:#222;line-height:15px;letter-spacing:0.185px;-webkit-text-stroke:0.25px #222;">Avbryt</span><div class="a " style="left:793px;top:777px;width:52px;height:29px;background:#2b5cf0;border-radius:4px;"></div><span class="t" style="left:806.00px;top:784.00px;font-size:11.5px;font-weight:700;color:#fff;line-height:15px;letter-spacing:-0.531px;">Send</span><div class="a " style="left:789px;top:773px;width:60px;height:38px;border:2px solid #e60000;"></div><svg style="left:0;top:0" width="1203" height="821" viewBox="0 0 1203 821" fill="none" stroke-linecap="round" stroke-linejoin="round"><path d="M836.2 275.1 L846 284.9 M846 275.1 L836.2 284.9" stroke="#111" stroke-width="1.9"/><path d="M837 582.5 L842.5 577 M840.3 582.5 L842.5 580.3" stroke="#666" stroke-width="1"/><path d="M832.2 644.3 L835.9 648 L839.6 644.3" stroke="#222" stroke-width="2"/></svg><div class="a " style="left:0px;top:0px;width:1203px;height:821px;border:1px solid #dcdcdc;pointer-events:none;"></div>
</body></html>
